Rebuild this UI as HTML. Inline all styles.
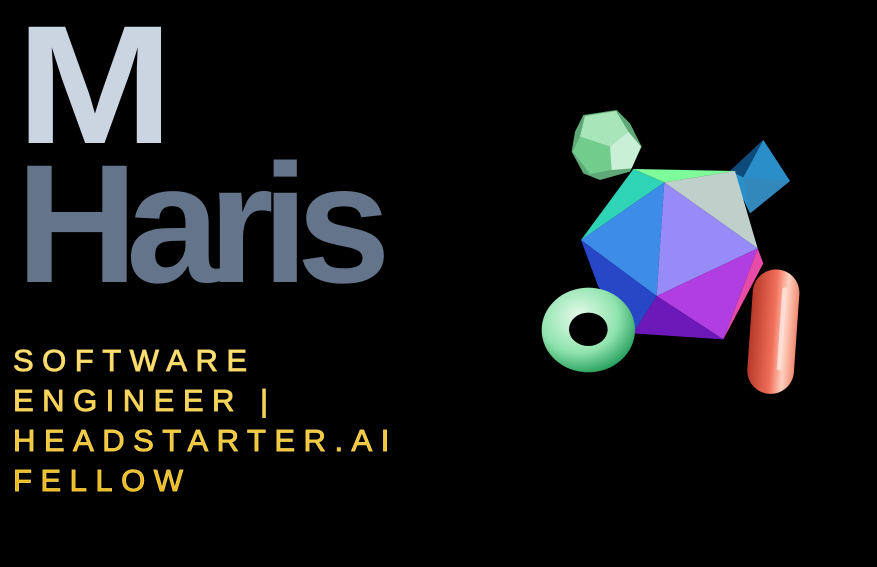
<!DOCTYPE html>
<html><head><meta charset="utf-8"><style>
html,body{margin:0;padding:0;background:#000;width:877px;height:567px;overflow:hidden;position:relative;font-family:"Liberation Sans",sans-serif}
.m{position:absolute;left:16px;top:0px;font-size:169px;font-weight:700;color:#cbd5e1;line-height:1;transform:scaleX(1.12);transform-origin:0 0}
.h{position:absolute;left:16px;top:139px;font-size:169px;font-weight:700;color:#64748b;line-height:1;letter-spacing:-12px}
.t{position:absolute;left:13px;top:341px;font-size:31px;line-height:40px;letter-spacing:8.5px;font-weight:400;
background:linear-gradient(180deg,#fde68a,#eab308);-webkit-background-clip:text;background-clip:text;color:transparent;-webkit-text-stroke:0.8px #f5d35a}
svg{position:absolute;left:530px;top:100px}
</style></head><body>
<div class="m">M</div>
<div class="h">Haris</div>
<div class="t">SOFTWARE<br>ENGINEER |<br>HEADSTARTER.AI<br>FELLOW</div>
<svg width="280" height="300" viewBox="0 0 840 900">
<defs>
<radialGradient id="tg" cx="0.4" cy="0.35" r="0.7"><stop offset="0" stop-color="#e6fbec"/><stop offset="0.6" stop-color="#8fe3ad"/><stop offset="1" stop-color="#1f9a55"/></radialGradient>
<linearGradient id="pg" x1="0" y1="0" x2="1" y2="0"><stop offset="0" stop-color="#b8382a"/><stop offset="0.5" stop-color="#f0705a"/><stop offset="0.75" stop-color="#ffd0c0"/><stop offset="1" stop-color="#f08a70"/></linearGradient>
</defs>
<polygon points="600,213 700,120 780,243 660,340" fill="#2a8fc8"/>
<polygon points="600,213 700,120 640,232" fill="#0e4a7a"/>
<polygon points="640,232 780,243 660,340" fill="#3288bb"/>
<polygon points="310,207 615,213 403,247" fill="#7efc9a"/>
<polygon points="310,207 403,247 153,420" fill="#2fd3b5"/>
<polygon points="403,247 615,213 683,445" fill="#bfd0cb"/>
<polygon points="153,420 403,247 380,588" fill="#3d8de8"/>
<polygon points="403,247 683,445 380,588" fill="#978cf7"/>
<polygon points="683,445 700,490 580,718" fill="#e84aa8"/>
<polygon points="683,445 580,718 380,588" fill="#b13ee0"/>
<polygon points="153,420 380,588 310,700 205,560" fill="#2847c7"/>
<polygon points="380,588 580,718 310,700" fill="#6d18b8"/>
<polygon points="160,45 260,30 300,70 335,140 300,215 210,240 160,220 125,155 135,95" fill="#5fa978"/>
<polygon points="165,48 258,33 295,95 240,140 150,110" fill="#a8e6b9"/>
<polygon points="150,110 240,140 245,210 180,222 128,155" fill="#72cd8c"/>
<polygon points="240,140 295,95 333,140 305,205 245,210" fill="#c9f0d6"/>
<path fill-rule="evenodd" fill="url(#tg)" d="M35,690 a140,127 0 1,0 280,0 a140,127 0 1,0 -280,0 Z M117,688 a58,50 0 1,0 116,0 a58,50 0 1,0 -116,0 Z"/>
<g transform="rotate(4 730 695)">
<rect x="660" y="508" width="140" height="374" rx="70" fill="url(#pg)"/>
<rect x="748" y="560" width="14" height="250" rx="7" fill="#ffe6e0" opacity="0.8"/>
</g>
</svg>
</body></html>
